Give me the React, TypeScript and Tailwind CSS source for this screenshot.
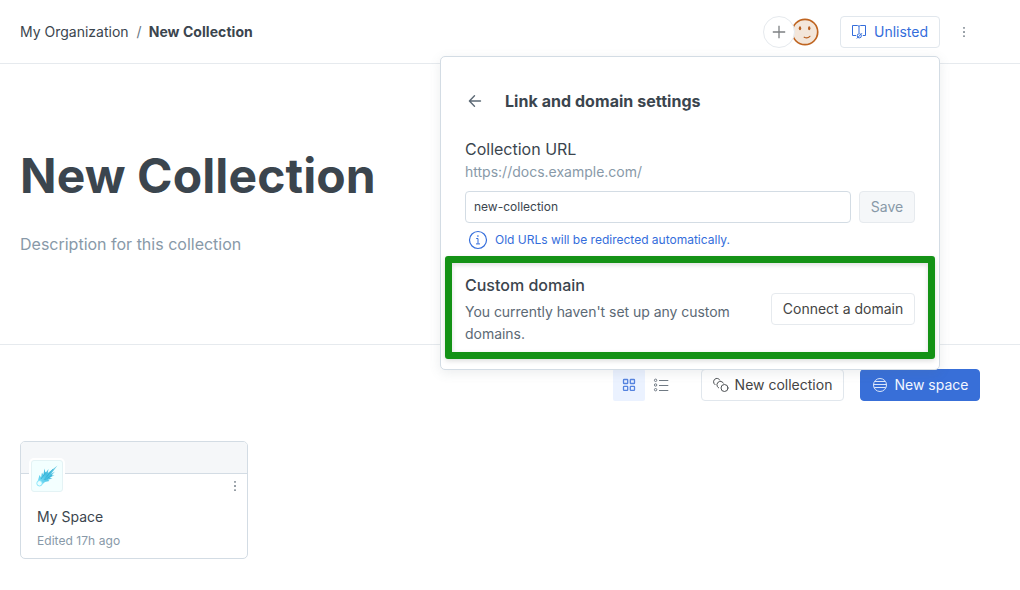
import React from "react";

function Dots({ className }: { className?: string }) {
  return (
    <svg width="16" height="16" viewBox="0 0 16 16" fill="#858e97" className={className}>
      <rect x="7.1" y="3" width="1.8" height="1.8" rx="0.5" />
      <rect x="7.1" y="7.1" width="1.8" height="1.8" rx="0.5" />
      <rect x="7.1" y="11.2" width="1.8" height="1.8" rx="0.5" />
    </svg>
  );
}

function BookIcon() {
  return (
    <svg width="16" height="16" viewBox="0 0 16 16" fill="none" stroke="#346ddb" strokeWidth="1">
      <path d="M5 11.500H1.500v-10h5c.9 0 1.500.4 1.500 1.200v6.300M8 2.700c0-.8.6-1.200 1.500-1.200h5v10h-2.700" />
      <circle cx="8.300" cy="11.800" r="2.100" />
      <path d="M5.800 14.500l5.200-5.300" />
    </svg>
  );
}

function Avatar() {
  return (
    <svg width="28" height="28" viewBox="0 0 28 28" fill="none">
      <circle cx="14" cy="14" r="12.700" fill="#f3e6da" stroke="#bf6420" strokeWidth="1.700" />
      <ellipse cx="9" cy="10.300" rx="1.200" ry="2" fill="#b95f20" />
      <ellipse cx="18.200" cy="10.300" rx="1.200" ry="2" fill="#b95f20" />
      <path d="M13.200 19.200c1.800.9 4.200.7 5.700-.9" stroke="#b95f20" strokeWidth="1.200" strokeLinecap="round" />
    </svg>
  );
}

function PlusIcon() {
  return (
    <svg width="14" height="14" viewBox="0 0 14 14" fill="none" stroke="#7d8083" strokeWidth="1.300">
      <path d="M7 .8v12.400M.8 7h12.400" />
    </svg>
  );
}

function ArrowLeft() {
  return (
    <svg width="20" height="20" viewBox="0 0 20 20" fill="none" stroke="#5c6975" strokeWidth="1.400" strokeLinecap="round" strokeLinejoin="round">
      <path d="M15.500 10h-11M9.500 4.800L4.400 10l5.100 5.200" />
    </svg>
  );
}

function InfoIcon() {
  return (
    <svg width="20" height="20" viewBox="0 0 20 20" fill="none" stroke="#346ddb" strokeWidth="1.200">
      <circle cx="10" cy="10" r="8.500" />
      <path d="M8.200 8.500H10v5.200M8 13.900h4" strokeWidth="1" />
      <circle cx="9.900" cy="6" r=".6" fill="#346ddb" strokeWidth=".4" />
    </svg>
  );
}

function GridIcon() {
  return (
    <svg width="16" height="16" viewBox="0 0 16 16" fill="none" stroke="#5583df" strokeWidth="1.300">
      <rect x="2.500" y="2.500" width="4.200" height="4" rx=".6" />
      <rect x="9.300" y="2.500" width="4.200" height="4" rx=".6" />
      <rect x="2.500" y="9.300" width="4.200" height="4" rx=".6" />
      <rect x="9.300" y="9.300" width="4.200" height="4" rx=".6" />
    </svg>
  );
}

function ListIcon() {
  return (
    <svg width="16" height="16" viewBox="0 0 16 16" fill="none" stroke="#707a84" strokeWidth="1">
      <circle cx="2.600" cy="3.300" r="1.200" />
      <circle cx="2.600" cy="8" r="1.200" />
      <circle cx="2.600" cy="12.700" r="1.200" />
      <path d="M6 3.500h9.300M6 8.500h9.300M6 13.500h9.300" />
    </svg>
  );
}

function CollectionIcon() {
  return (
    <svg width="16" height="16" viewBox="0 0 16 16" fill="none" stroke="#4c5053" strokeWidth="1" strokeLinecap="round">
      <circle cx="11.500" cy="11" r="3.500" />
      <path d="M5.600 10.900a3.500 3.500 0 0 1 1-6.400c1.700-.3 3.200.5 3.900 1.700" />
      <path d="M2 7.700a3.500 3.500 0 0 1 1.100-6.200c1.700-.3 3.100.4 3.700 1.600" />
    </svg>
  );
}

function SpaceIcon() {
  return (
    <svg width="16" height="16" viewBox="0 0 16 16" fill="none" stroke="#dce7fa" strokeWidth="1">
      <circle cx="8" cy="8" r="6.500" />
      <path d="M3 4.500h10M1.500 7.500h13M2.200 10.500h11.600" />
    </svg>
  );
}

function Comet() {
  return (
    <svg width="24" height="24" viewBox="0 0 24 24">
      <defs>
        <linearGradient id="tail" x1="3" y1="21" x2="21" y2="2" gradientUnits="userSpaceOnUse">
          <stop stopColor="#8be7fb" />
          <stop offset=".5" stopColor="#45bfe2" />
          <stop offset="1" stopColor="#79cfe5" />
        </linearGradient>
      </defs>
      <path fill="url(#tail)" d="M2.200 19L4.500 11 6 13.500 7 8.500 8.300 11 9.500 4.500 10.500 9 13.500 5 12.800 9 22.500 1.500 16 10 20 7.500 16.500 11.500 19.500 11 14.500 14 17.500 14.500 13 15.700 14.500 17 10 18 5.500 22Z" />
      <path stroke="#28a9d0" strokeWidth=".6" d="M6 15l5-7M9 16l9-11M10 16l7-5" />
      <circle cx="4.500" cy="19.300" r="2.700" fill="#e9feff" stroke="#75dff7" strokeWidth=".8" />
    </svg>
  );
}

const button = "flex h-8 items-center justify-center rounded-[4px] border text-[14px] leading-5";

function SettingsPopup() {
  return (
    <section className="absolute top-[56px] left-[440px] h-[314px] w-[500px] rounded-[5px] border border-[#d3dce4] bg-white px-6 pt-[34px] shadow-[0_3px_12px_rgba(92,105,117,0.12)]">
      <div className="flex h-5 items-center">
        <ArrowLeft />
        <h2 className="ml-5 text-[16px] leading-5 font-bold tracking-[0.05px]">Link and domain settings</h2>
      </div>
      <h3 className="mt-[26px] text-[16px] leading-6">Collection URL</h3>
      <p className="text-[14px] leading-[22px] text-[#8899a8]">https://docs.example.com/</p>
      <div className="mt-2 flex gap-2">
        <input
          className="h-8 w-[386px] rounded-[4px] border border-[#d3dce4] px-2 pb-px text-[12px] outline-none"
          defaultValue="new-collection"
        />
        <button className={`${button} w-14 border-[#e6eaee] bg-[#f5f7f9] text-[#8899a8]`}>Save</button>
      </div>
      <div className="mt-[7px] flex h-5 items-center gap-[7px] pl-[3px] text-[12px] text-[#346ddb]">
        <InfoIcon />
        <span>Old URLs will be redirected automatically.</span>
      </div>
      <div className="mt-[6px] -mr-5 -ml-5 flex h-[103px] items-center justify-between rounded-[3px] border-[7px] border-[#149216] px-[13px] pt-[2px] shadow-[0_2px_5px_rgba(0,0,0,0.13),inset_0_2px_5px_rgba(0,0,0,0.13)]">
        <div className="w-[290px]">
          <h3 className="text-[16px] leading-6 font-medium">Custom domain</h3>
          <p className="mt-1 text-[14px] leading-[22px] tracking-[-0.035px] text-[#5c6975]">
            You currently haven't set up any custom domains.
          </p>
        </div>
        <button className={`${button} w-36 border-[#e6eaee] bg-white text-[#444]`}>Connect a domain</button>
      </div>
    </section>
  );
}

export default function App() {
  return (
    <main className="relative h-[590px] w-[1020px] overflow-hidden bg-white font-['Inter',sans-serif] text-[#3b454e]">
      <header className="flex h-16 items-center border-b border-[#e6eaee] pr-12 pl-5 text-[14px]">
        <span>My Organization</span>
        <span className="mr-[7px] ml-2 text-[#687581]">/</span>
        <strong className="font-bold tracking-[0.06px]">New Collection</strong>
        <div className="ml-auto flex items-center">
          <div className="z-10 flex size-8 items-center justify-center rounded-full border border-[#e6eaee] bg-white">
            <PlusIcon />
          </div>
          <div className="-ml-1"><Avatar /></div>
          <button className={`${button} ml-[21px] w-[100px] gap-[7px] border-[#e1e7ed] pr-px text-[#346ddb]`}>
            <BookIcon />Unlisted
          </button>
          <Dots className="ml-4" />
        </div>
      </header>

      <section className="h-[281px] border-b border-[#e6eaee] px-5 pt-[82px]">
        <h1 className="text-[48px] leading-[60px] font-bold tracking-[0.1px]">New Collection</h1>
        <p className="mt-[26px] text-[16px] leading-6 text-[#8899a8]">Description for this collection</p>
      </section>

      <div className="mt-6 flex h-8 justify-end pr-10">
        <div className="flex">
          <button className="flex size-8 items-center justify-center rounded-[2px] bg-[#ebf2ff]"><GridIcon /></button>
          <button className="flex size-8 items-center justify-center"><ListIcon /></button>
        </div>
        <button className={`${button} ml-6 w-[143px] gap-[6px] border-[#e1e7ed] text-[#444]`}>
          <CollectionIcon />New collection
        </button>
        <button className={`${button} ml-4 w-[120px] gap-[7px] border-[#386fd8] bg-[#386fd8] text-[#f3f7ff]`}>
          <SpaceIcon />New space
        </button>
      </div>

      <article className="relative mt-10 ml-5 h-[118px] w-[228px] overflow-hidden rounded-[5px] border border-[#d3dce4]">
        <div className="h-8 border-b border-[#d3dce4] bg-[#f5f7f9]" />
        <div className="absolute top-4 left-2 flex size-9 items-center justify-center rounded-[5px] bg-white">
          <div className="flex size-8 items-center justify-center rounded-[3px] border border-[#e4f3f5] bg-[#f3ffff]"><Comet /></div>
        </div>
        <Dots className="absolute top-9 right-1" />
        <div className="px-4 pt-[33px]">
          <h3 className="text-[14px] leading-5">My Space</h3>
          <p className="mt-[5px] text-[12px] leading-[18px] tracking-[0.05px] text-[#8899a8]">Edited 17h ago</p>
        </div>
      </article>

      <SettingsPopup />
    </main>
  );
}
